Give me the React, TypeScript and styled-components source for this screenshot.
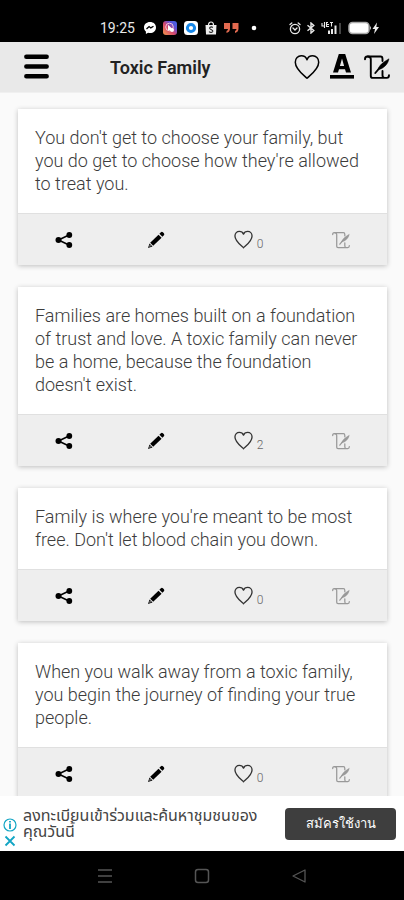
import React, { useState } from "react";
import styled, { createGlobalStyle } from "styled-components";

const GlobalStyle = createGlobalStyle`
  * { box-sizing: border-box; }
  body { margin: 0; background: #fafafa; font-family: Roboto, "Noto Sans", sans-serif; }
  button { border: 0; padding: 0; background: none; color: inherit; font: inherit; cursor: pointer; }
  svg { display: block; flex: none; }
`;

const Screen = styled.div`
  display: flex;
  flex-direction: column;
  height: 100vh;
  overflow: hidden;
`;

const StatusBar = styled.div`
  flex: none;
  display: flex;
  align-items: center;
  justify-content: space-between;
  height: 42px;
  padding: 14px 24px 0 100px;
  background: #000;
  color: #e8e8e8;
`;

const StatusGroup = styled.div<{ $gap: number }>`
  display: flex;
  align-items: center;
  gap: ${(p) => p.$gap}px;
`;

const Clock = styled.time`
  margin-right: 2px;
  font-size: 14px;
  line-height: 18px;
`;

const AppBar = styled.header`
  flex: none;
  display: flex;
  align-items: center;
  height: 51px;
  padding: 0 14px 0 24px;
  border-bottom: 1px solid #f0f0f0;
  background: #e9e9e9;
  color: #000;
`;

const Title = styled.h1`
  flex: 1;
  margin: 2px 0 0 61px;
  font-size: 18px;
  line-height: 24px;
  font-weight: 600;
  color: #222;
`;

const BarActions = styled.div`
  display: flex;
  align-items: center;
  gap: 9px;
`;

const QuoteList = styled.main`
  flex: 1;
  min-height: 0;
  display: flex;
  flex-direction: column;
  gap: 22px;
  padding: 16px 17px 0 18px;
  overflow: hidden;
`;

const Card = styled.article`
  flex: none;
  background: #fff;
  box-shadow: 0 1px 5px rgba(0, 0, 0, 0.24);
`;

const Quote = styled.p`
  margin: 0;
  padding: 17px 17px 18px;
  font-size: 18px;
  line-height: 23px;
  font-weight: 300;
  color: #3c3c3c;
`;

const CardActions = styled.footer`
  display: grid;
  grid-template-columns: repeat(4, 1fr);
  height: 52px;
  border-top: 1px solid #e0e0e0;
  background: #eee;
`;

const Action = styled.button<{ $tone: string }>`
  display: flex;
  align-items: center;
  justify-content: center;
  gap: 4px;
  color: ${(p) => p.$tone};
`;

const Count = styled.span`
  padding-top: 8px;
  font-size: 12px;
  line-height: 14px;
  font-weight: 300;
  color: #666;
`;

const Ad = styled.aside`
  flex: none;
  display: flex;
  align-items: center;
  height: 55px;
  padding: 0 8px 0 3px;
  background: #fff;
`;

const AdControls = styled.div`
  display: flex;
  flex-direction: column;
  gap: 3px;
  padding-top: 18px;
  color: #12a5c4;
`;

const AdText = styled.p`
  flex: 1;
  margin: 0 12px 0 6px;
  font-family: Roboto, "Noto Sans Thai", "Noto Sans", sans-serif;
  font-size: 16px;
  line-height: 16px;
  color: #444;
`;

const AdButton = styled.button`
  && {
    width: 111px;
    height: 32px;
    border-radius: 4px;
    background: #3e3e3e;
    color: #fff;
    font-size: 13px;
    font-weight: 500;
  }
`;

const NavBar = styled.nav`
  flex: none;
  display: flex;
  justify-content: center;
  align-items: center;
  gap: 81px;
  height: 49px;
  background: #000;
  color: #555;
`;

const Heart = ({ size, stroke }: { size: number; stroke: number }) => (
  <svg width={size} height={size} viewBox="0 0 26 26" fill="none" stroke="currentColor" strokeWidth={stroke} strokeLinejoin="round">
    <path d="M13 24.3C10.5 21.7 1.3 15.5 1.3 8.2 1.3 4.4 4 1.8 7.3 1.8c2.6 0 4.8 1.4 5.7 3.9.9-2.5 3.1-3.9 5.7-3.9 3.3 0 6 2.6 6 6.4C24.7 15.5 15.5 21.7 13 24.3Z" />
  </svg>
);

const Scroll = ({ size, stroke }: { size: number; stroke: number }) => (
  <svg width={size} height={size} viewBox="0 0 26 26" fill="none" stroke="currentColor" strokeWidth={stroke} strokeLinecap="round" strokeLinejoin="round">
    <path d="M1 5.200C1 3.500 1.600 2.500 3.200 2.500H16.500c1.500 0 2 1 2 2.400V7" />
    <path d="M3.800 2.500c2 0 3 .9 3 2.700V22c0 1.200.7 1.900 2 1.900H22.800c1.500 0 2.200-.9 2.200-2.600M18.500 17v4.200c0 1.600.6 2.500 2 2.700" />
    <path d="m11.300 19 4.200-5" />
    <path d="M14 15.800C14.500 11.500 19.500 8 25 4.800 24 10.300 19.500 14.800 14 15.800Z" fill="currentColor" strokeWidth="0.500" />
  </svg>
);

const Share = () => (
  <svg width="18" height="16" viewBox="0 0 18 16" fill="currentColor">
    <path d="M3.5 8 14 3M3.5 8 14 13" stroke="currentColor" strokeWidth="1.5" />
    <circle cx="3.5" cy="8" r="3" />
    <circle cx="14.3" cy="3" r="2.9" />
    <circle cx="14.3" cy="13" r="2.9" />
  </svg>
);

const Pencil = () => (
  <svg width="18" height="18" viewBox="0 0 18 18" fill="currentColor">
    <path d="m12.4 2.8 1.5-1.5q1-.9 2 0l1 1q.9 1 0 1.9l-1.5 1.6Z" />
    <path d="m11.5 3.7 3.1 3.1-8.4 8-3-3.1Z" />
    <path d="M2.5 12.5 5.5 15.5 1 17.1Z" />
    <path d="m2.8 13.9 1.2 1.2-1.6.6Z" fill="#eee" />
  </svg>
);

const Menu = () => (
  <svg width="25" height="26" viewBox="0 0 25 26" stroke="currentColor" strokeWidth="4.4" strokeLinecap="round">
    <path d="M2.3 2.7h20.4M2.3 12.5h20.4M2.3 22.3h20.4" />
  </svg>
);

const FontIcon = () => (
  <svg width="26" height="26" viewBox="0 0 26 26" fill="currentColor">
    <path fillRule="evenodd" d="M9.8 0h6.4L22 18.500h-5l-1-3.300h-6L9 18.500H4ZM13 4.5 10.9 12h4.2Z" />
    <rect x="1" y="21" width="24" height="3.6" />
  </svg>
);

const Messenger = () => (
  <svg width="12" height="12" viewBox="0 0 12 12">
    <path d="M6 0C2.5 0 0 2.3 0 5.4c0 1.7.7 3.1 1.9 4V12l2.2-1.2c.6.1 1.2.2 1.9.2 3.5 0 6-2.4 6-5.6S9.500 0 6 0Z" fill="#fff" />
    <path d="m2.5 7 2.600-2.500 1.700 1.400L9.500 4.300" fill="none" stroke="#000" strokeWidth="1.300" />
  </svg>
);

const VideoApp = () => (
  <svg width="14" height="14" viewBox="0 0 14 14">
    <defs>
      <linearGradient id="videoTone" x1="0" y1="1" x2="1" y2="0">
        <stop offset="0" stopColor="#f39a4a" />
        <stop offset="0.450" stopColor="#d6476f" />
        <stop offset="0.700" stopColor="#5b52d6" />
        <stop offset="1" stopColor="#3e65e8" />
      </linearGradient>
    </defs>
    <rect width="14" height="14" rx="3" fill="url(#videoTone)" />
    <circle cx="6.500" cy="6" r="3.800" fill="none" stroke="#f3c3d8" strokeWidth="1" />
    <path d="M5 3.800v5.400L10.500 9Z" fill="#fff" />
    <circle cx="9" cy="9" r="2" fill="#fff" />
  </svg>
);

const RingApp = () => (
  <svg width="14" height="14" viewBox="0 0 14 14">
    <rect width="14" height="14" rx="3.500" fill="#fff" />
    <circle cx="7" cy="7" r="3.600" fill="#fff" stroke="#1687e8" strokeWidth="3" />
  </svg>
);

const ShopBag = () => (
  <svg width="12" height="14" viewBox="0 0 12 14">
    <path d="M.5 4h11l-.5 9.500H1Z" fill="#eee" />
    <path d="M3.500 4C3.500 0 8.500 0 8.500 4" fill="none" stroke="#eee" strokeWidth="1.200" />
    <path d="M7.800 6.500C6 5 3.500 6.800 5.300 8.100c1.200.8 2.800.8 2.500 2.300-.4 1.300-2.500 1.300-3.800.2" fill="none" stroke="#222" strokeWidth="1.100" />
  </svg>
);

const QuoteMarks = () => (
  <svg width="15" height="12" viewBox="0 0 15 12" fill="#e26a50">
    <path d="M0 1h6v5.500Q6 10 2.500 11V9Q4 8.300 4 7H0ZM8.500 1h6v5.500q0 3.500-3.500 4.500V9q1.500-.7 1.500-2h-4Z" />
  </svg>
);

const Dot = () => (
  <svg width="12" height="6" viewBox="0 0 12 6">
    <circle cx="8" cy="3" r="2.300" fill="#fff" />
  </svg>
);

const Alarm = () => (
  <svg width="12" height="13" viewBox="0 0 12 13" fill="none" stroke="currentColor" strokeWidth="1.300" strokeLinecap="round">
    <circle cx="6" cy="7" r="4.600" />
    <path d="m1 2.500 1.800-1.600M11 2.500 9.200.9M4 6l2 2 2-2" />
  </svg>
);

const Bluetooth = () => (
  <svg width="10" height="12" viewBox="0 0 10 12" fill="none" stroke="currentColor" strokeWidth="1.400">
    <path d="m1.500 3.200 6.300 5.300L5 11V1l2.800 2.500-6.300 5.300" />
  </svg>
);

const Signal = () => (
  <svg width="22" height="14" viewBox="0 0 22 14" fill="none" stroke="currentColor">
    <path d="M1 2v3h3M3.500 1v6M7 1.500H5.500v4H8M8 3.500H6M9 1.500h3M10.500 1.500v4" strokeWidth="1.100" />
    <path d="M8 13V9.500M11 13V8M14.500 13V4.500" strokeWidth="2" />
    <path d="M19 13V2" stroke="#444" strokeWidth="2" />
  </svg>
);

const Battery = () => (
  <svg width="32" height="14" viewBox="0 0 32 14">
    <rect x="1" y="1.500" width="20" height="11" rx="3.500" fill="#fff" stroke="#aaa" strokeWidth="1.500" />
    <path d="M22 5q2 2 0 4Z" fill="#ccc" />
    <path d="M29 1.500 24.500 8H27l-1 5 5-7h-2.700Z" fill="#eee" />
  </svg>
);

const quotes = [
  { text: "You don't get to choose your family, but you do get to choose how they're allowed to treat you.", likes: 0 },
  { text: "Families are homes built on a foundation of trust and love. A toxic family can never be a home, because the foundation doesn't exist.", likes: 2 },
  { text: "Family is where you're meant to be most free. Don't let blood chain you down.", likes: 0 },
  { text: "When you walk away from a toxic family, you begin the journey of finding your true people.", likes: 0 },
];

function QuoteCard({ text, likes }: { text: string; likes: number }) {
  const [liked, setLiked] = useState(false);
  return (
    <Card>
      <Quote>{text}</Quote>
      <CardActions>
        <Action $tone="#000" aria-label="Share"><Share /></Action>
        <Action $tone="#000" aria-label="Edit"><Pencil /></Action>
        <Action $tone="#333" aria-label="Like" aria-pressed={liked} onClick={() => setLiked(!liked)}>
          <Heart size={19} stroke={1.8} />
          <Count>{likes + (liked ? 1 : 0)}</Count>
        </Action>
        <Action $tone="#999" aria-label="Write"><Scroll size={18} stroke={1.8} /></Action>
      </CardActions>
    </Card>
  );
}

export default function App() {
  return (
    <Screen>
      <GlobalStyle />
      <StatusBar>
        <StatusGroup $gap={7}>
          <Clock>19:25</Clock>
          <Messenger />
          <VideoApp />
          <RingApp />
          <ShopBag />
          <QuoteMarks />
          <Dot />
        </StatusGroup>
        <StatusGroup $gap={5}>
          <Alarm />
          <Bluetooth />
          <Signal />
          <Battery />
        </StatusGroup>
      </StatusBar>
      <AppBar>
        <button aria-label="Menu"><Menu /></button>
        <Title>Toxic Family</Title>
        <BarActions>
          <button aria-label="Favourites"><Heart size={26} stroke={1.5} /></button>
          <button aria-label="Text style"><FontIcon /></button>
          <button aria-label="Write a quote"><Scroll size={26} stroke={1.9} /></button>
        </BarActions>
      </AppBar>
      <QuoteList>
        {quotes.map((q) => <QuoteCard key={q.text} text={q.text} likes={q.likes} />)}
      </QuoteList>
      <Ad>
        <AdControls>
          <button aria-label="Ad information">
            <svg width="14" height="14" viewBox="0 0 14 14" fill="none" stroke="currentColor">
              <circle cx="7" cy="7" r="6" strokeWidth="1.200" />
              <path d="M7 3v1.500M7 5.500V11" strokeWidth="1.800" />
            </svg>
          </button>
          <button aria-label="Close ad">
            <svg width="14" height="12" viewBox="0 0 14 12" stroke="currentColor" strokeWidth="1.800">
              <path d="m2.500 1.500 9 9M11.500 1.500l-9 9" />
            </svg>
          </button>
        </AdControls>
        <AdText lang="th">ลงทะเบียนเข้าร่วมและค้นหาชุมชนของคุณวันนี้</AdText>
        <AdButton lang="th">สมัครใช้งาน</AdButton>
      </Ad>
      <NavBar>
        <button aria-label="Recent apps">
          <svg width="16" height="16" viewBox="0 0 16 16" stroke="currentColor" strokeWidth="1.500">
            <path d="M1 2h14M1 8h14M1 14h14" />
          </svg>
        </button>
        <button aria-label="Home">
          <svg width="16" height="16" viewBox="0 0 16 16" fill="none" stroke="currentColor" strokeWidth="1.500">
            <rect x="1.500" y="1.500" width="13" height="13" rx="2.500" />
          </svg>
        </button>
        <button aria-label="Back">
          <svg width="16" height="16" viewBox="0 0 16 16" fill="none" stroke="currentColor" strokeWidth="1.300" strokeLinejoin="round">
            <path d="M14 2v12L2 8Z" />
          </svg>
        </button>
      </NavBar>
    </Screen>
  );
}
